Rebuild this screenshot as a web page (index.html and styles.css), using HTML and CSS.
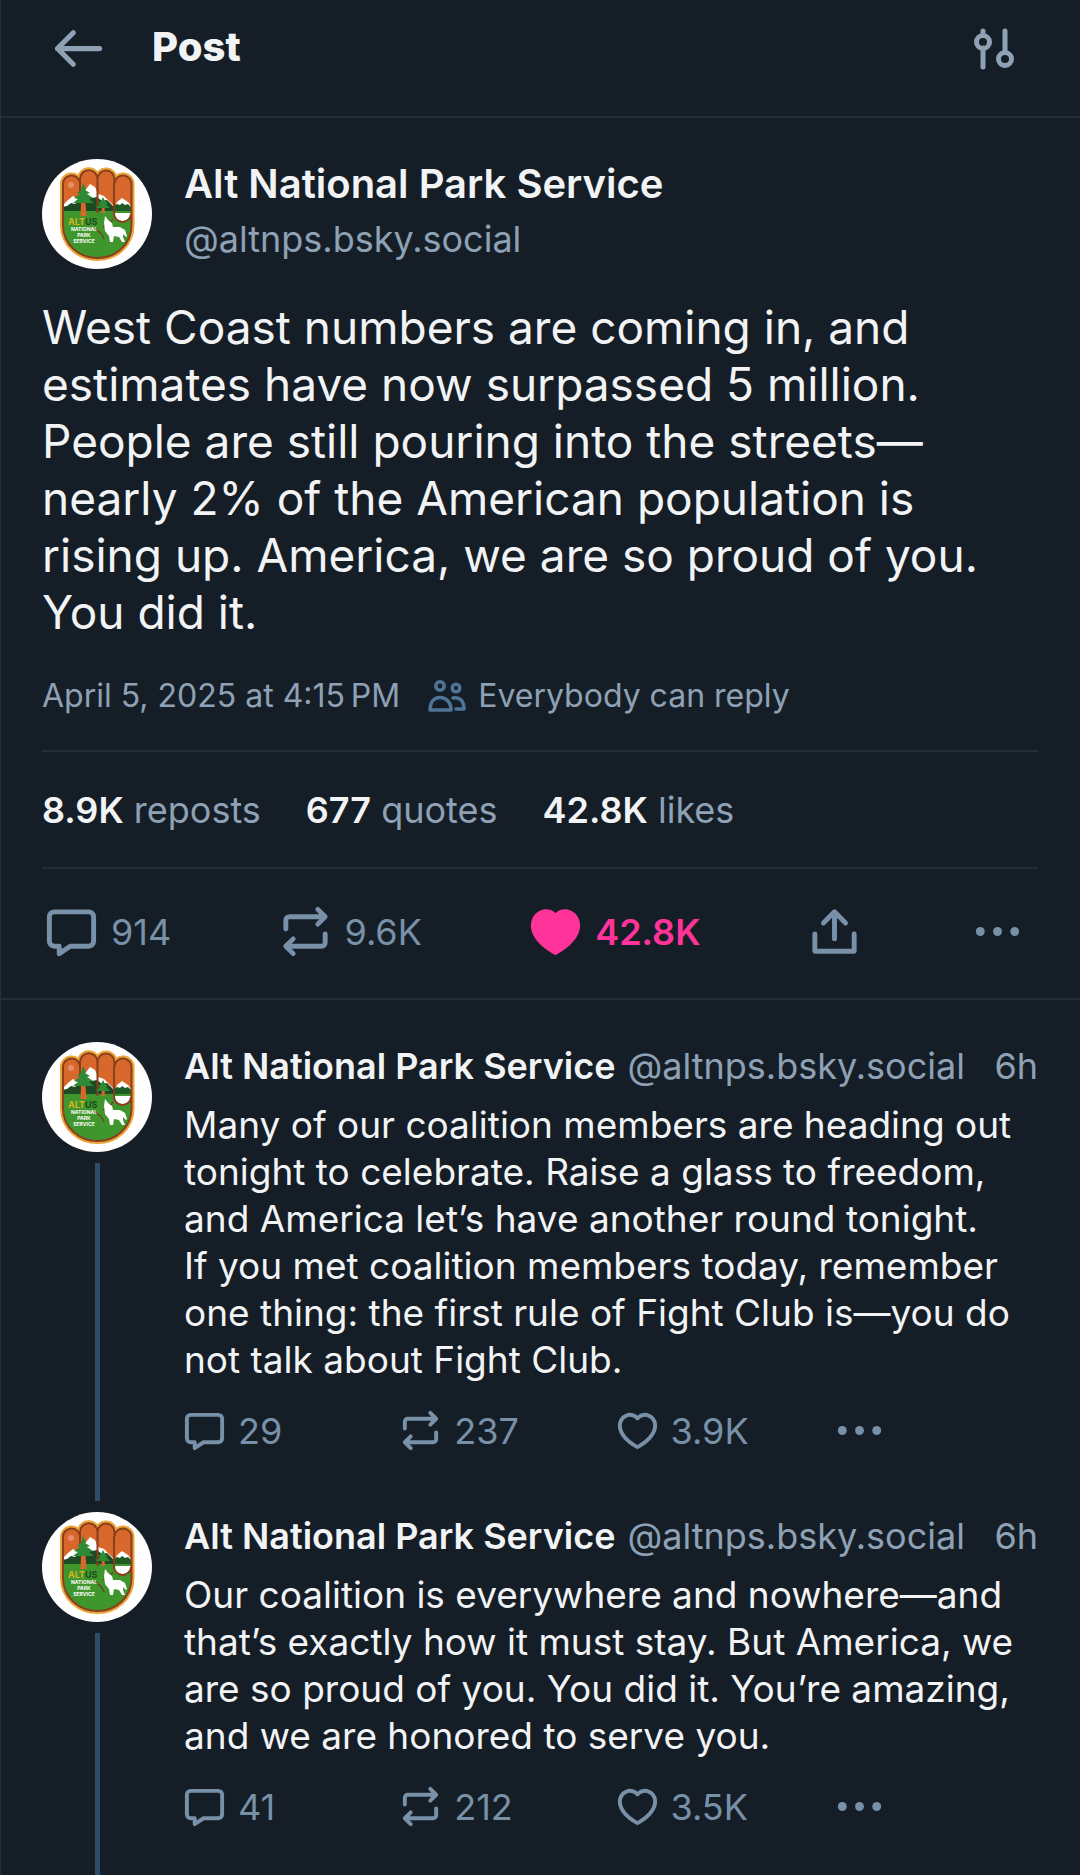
FILE: index.html
```html
<!DOCTYPE html>
<html lang="en">
<head>
<meta charset="utf-8">
<meta name="viewport" content="width=device-width, initial-scale=1">
<title>Post</title>
<link rel="stylesheet" href="styles.css">
</head>
<body>
<svg class="sprite" aria-hidden="true">
  <symbol id="emblem" viewBox="0 0 110 110">
    <clipPath id="hand">
      <path d="M21 26a8 8 0 0 1 17-2V20a8.500 8.500 0 0 1 17.500 0 8.500 8.500 0 0 1 17 0v4a8 8 0 0 1 17 2V66c0 20-16 33-34 33S21 86 21 66z"/>
    </clipPath>
    <circle cx="55" cy="55" r="55" fill="#fff"/>
    <path d="M21 26a8 8 0 0 1 17-2V20a8.500 8.500 0 0 1 17.500 0 8.500 8.500 0 0 1 17 0v4a8 8 0 0 1 17 2V66c0 20-16 33-34 33S21 86 21 66z" fill="none" stroke="#eba53a" stroke-width="6" stroke-linejoin="round"/>
    <g clip-path="url(#hand)">
      <rect x="18" y="8" width="75" height="48" fill="#d8672c"/>
      <path d="M20 53V47l6-6 5-4 5 3 6-7 6-8 5 3 3 7 6 2 6 6 4 4v7z" fill="#fff"/>
      <path d="M20 54v-6l5-1 4-3 4 1 5-5 3-3 5-1 4 3 5-1 5 4 5-1 4 4 3 3v6z" fill="#1d4a22"/>
      <path d="M72 52l3-9 5-4 6 4 4 5v5z" fill="#fff"/>
      <path d="M72 53v-6l3-2 3 1 2-2 3 2 3-1 4 4v5z" fill="#1d5a24"/>
      <rect x="18" y="52" width="75" height="50" fill="#3f962c"/>
      <path d="M72 54h17a8.500 8 0 0 1-17 0z" fill="#fff"/>
      <path d="M38 19v16M55.500 20v34M72 24v30a8.500 8.500 0 0 0 17 1" fill="none" stroke="#8a3f1c" stroke-width="2"/>
      <path d="M71 60q-3 5-10 8M52 70q8 3 10 10" fill="none" stroke="#6b4a20" stroke-width="1.500"/>
      <path d="M38.500 57l1-26h3l2 26zM59.500 54l1-12h1.500l1 12z" fill="#d8672c"/>
      <path d="M41 24l3 6-1 1 5 3-3 1 6 4-4 1 5 4H31l5-4-4-1 6-4-3-1 4-3z" fill="#2f8a35"/>
      <path d="M61 38l2 4 3 2-2 1 4 4H54l4-4-2-1 3-2z" fill="#2f8a35"/>
      <circle cx="29" cy="26" r="3" fill="#e88e68"/>
    </g>
    <path d="M21 26a8 8 0 0 1 17-2V20a8.500 8.500 0 0 1 17.500 0 8.500 8.500 0 0 1 17 0v4a8 8 0 0 1 17 2V66c0 20-16 33-34 33S21 86 21 66z" fill="none" stroke="#8a3f1c" stroke-width="2" stroke-linejoin="round"/>
    <path d="M63 57l3 4 4 3 1 4h7l5 3 2 6-1 1-3-3v3l2 5h-3l-3-5-5-1-1 6h-3l-1-6-4-5-1-8z" fill="#fff"/>
  </symbol>
  <symbol id="back" viewBox="0 0 24 24">
    <path d="M4 12h16M10 6l-6 6 6 6" class="line"/>
  </symbol>
  <symbol id="sliders" viewBox="0 0 42 42">
    <path d="M10 3v4M10 20v19M32 3v21" fill="none" stroke="currentColor" stroke-width="5" stroke-linecap="round"/>
    <circle cx="10" cy="14" r="6.500" fill="none" stroke="currentColor" stroke-width="5"/>
    <circle cx="32" cy="31" r="6.500" fill="none" stroke="currentColor" stroke-width="5"/>
  </symbol>
  <symbol id="people" viewBox="0 0 38 32">
    <g fill="none" stroke="currentColor" stroke-width="3.500" stroke-linejoin="round">
      <circle cx="12" cy="6" r="4.200"/>
      <circle cx="28" cy="8" r="3.800"/>
      <path d="M2 30c0-8 4-12.500 10-12.500S23 22 23 30z"/>
      <path d="M25 18c7-1.500 11 3 11 11h-8" stroke-linecap="round"/>
    </g>
  </symbol>
  <symbol id="comment" viewBox="0 0 24 24">
    <path d="M5 4h14a2 2 0 0 1 2 2v10a2 2 0 0 1-2 2h-7.500L7 21v-3H5a2 2 0 0 1-2-2V6a2 2 0 0 1 2-2z" class="line"/>
  </symbol>
  <symbol id="repost" viewBox="0 0 24 24">
    <path d="M17 3l3 3-3 3M20 6H5.500A1.500 1.500 0 0 0 4 7.500V11M7 15l-3 3 3 3M4 18h14.500a1.500 1.500 0 0 0 1.500-1.500V13" class="line"/>
  </symbol>
  <symbol id="heart" viewBox="0 0 24 24">
    <path fill="currentColor" d="M16.734 5.091c-1.238-.276-2.708.047-4.022 1.380a1 1 0 0 1-1.424 0C9.974 5.137 8.504 4.814 7.266 5.090c-1.263.282-2.379 1.206-2.920 2.556C3.330 10.180 4.252 14.840 12 19.348c7.747-4.508 8.670-9.168 7.654-11.700-.541-1.351-1.657-2.275-2.920-2.557Zm4.777 1.812c1.604 4-.494 9.690-9.022 14.470a1 1 0 0 1-.978 0C2.983 16.592.885 10.902 2.490 6.902c.779-1.942 2.414-3.334 4.342-3.764 1.697-.378 3.552.003 5.169 1.286 1.617-1.283 3.472-1.664 5.170-1.286 1.927.430 3.562 1.822 4.340 3.764Z"/>
  </symbol>
  <symbol id="heart-filled" viewBox="0 0 24 24">
    <path fill="currentColor" d="M12.489 21.372c8.528-4.780 10.626-10.470 9.022-14.470-.779-1.941-2.414-3.333-4.342-3.763-1.697-.378-3.552.003-5.169 1.287-1.617-1.284-3.472-1.665-5.170-1.287-1.927.430-3.562 1.822-4.340 3.764-1.605 4 .493 9.690 9.021 14.470a1 1 0 0 0 .978 0Z"/>
  </symbol>
  <symbol id="share" viewBox="0 0 24 24">
    <path d="M4 13v7h16v-7M12 4v11M7.500 8.500L12 4l4.500 4.500" class="line"/>
  </symbol>
  <symbol id="more" viewBox="0 0 24 24">
    <g fill="currentColor"><circle cx="5" cy="12" r="1.800"/><circle cx="12" cy="12" r="1.800"/><circle cx="19" cy="12" r="1.800"/></g>
  </symbol>
</svg>

<main class="page">
  <header class="topbar">
    <button class="icon-button" aria-label="Back"><svg class="icon-back"><use href="#back"/></svg></button>
    <h1 class="title">Post</h1>
    <button class="icon-button" aria-label="Thread options"><svg class="icon-sliders"><use href="#sliders"/></svg></button>
  </header>

  <article class="post">
    <div class="author">
      <svg class="avatar" viewBox="0 0 110 110">
        <use href="#emblem"/>
        <text x="26" y="66" class="emblem-alt">ALT<tspan class="emblem-us">US</tspan></text>
        <text x="42" y="72" class="emblem-small">NATIONAL</text>
        <text x="42" y="78" class="emblem-small">PARK</text>
        <text x="42" y="84" class="emblem-small">SERVICE</text>
      </svg>
      <div>
        <a class="author-name" href="#profile">Alt National Park Service</a>
        <a class="author-handle" href="#profile">@altnps.bsky.social</a>
      </div>
    </div>
    <p class="post-text">West Coast numbers are coming in, and estimates have now surpassed 5 million. People are still pouring into the streets—nearly 2% of the American population is rising up. America, we are so proud of you. You did it.</p>
    <div class="meta">
      <time datetime="2025-04-05T16:15">April 5, 2025 at 4:15&#x202F;PM</time>
      <button class="audience"><svg class="icon-people" aria-hidden="true"><use href="#people"/></svg>Everybody can reply</button>
    </div>
    <div class="stats">
      <a href="#reposts"><b>8.9K</b> reposts</a>
      <a href="#quotes"><b>677</b> quotes</a>
      <a href="#likes"><b>42.8K</b> likes</a>
    </div>
    <div class="actions">
      <button class="action" aria-label="Reply"><svg class="icon-large"><use href="#comment"/></svg>914</button>
      <button class="action" aria-label="Repost"><svg class="icon-large"><use href="#repost"/></svg>9.6K</button>
      <button class="action liked" aria-label="Unlike"><svg class="icon-large"><use href="#heart-filled"/></svg>42.8K</button>
      <button class="action" aria-label="Share"><svg class="icon-large"><use href="#share"/></svg></button>
      <button class="action" aria-label="More"><svg class="icon-large"><use href="#more"/></svg></button>
    </div>
  </article>

  <section class="thread">
    <article class="reply">
      <div class="rail">
        <svg class="avatar" viewBox="0 0 110 110">
          <use href="#emblem"/>
          <text x="26" y="66" class="emblem-alt">ALT<tspan class="emblem-us">US</tspan></text>
          <text x="42" y="72" class="emblem-small">NATIONAL</text>
          <text x="42" y="78" class="emblem-small">PARK</text>
          <text x="42" y="84" class="emblem-small">SERVICE</text>
        </svg>
        <div class="rail-line"></div>
      </div>
      <div class="reply-body">
        <div class="byline"><a class="byline-name" href="#profile">Alt National Park Service</a><a class="byline-handle" href="#profile">@altnps.bsky.social</a><time>6h</time></div>
        <p class="reply-text">Many of our coalition members are heading out tonight to celebrate. Raise a glass to freedom, and America let’s have another round tonight.<br>If you met coalition members today, remember one thing: the first rule of Fight Club is—you do not talk about Fight Club.</p>
        <div class="reply-actions">
          <button class="action" aria-label="Reply"><svg class="icon"><use href="#comment"/></svg>29</button>
          <button class="action" aria-label="Repost"><svg class="icon"><use href="#repost"/></svg>237</button>
          <button class="action" aria-label="Like"><svg class="icon"><use href="#heart"/></svg>3.9K</button>
          <button class="action" aria-label="More"><svg class="icon-more"><use href="#more"/></svg></button>
        </div>
      </div>
    </article>
    <article class="reply">
      <div class="rail">
        <svg class="avatar" viewBox="0 0 110 110">
          <use href="#emblem"/>
          <text x="26" y="66" class="emblem-alt">ALT<tspan class="emblem-us">US</tspan></text>
          <text x="42" y="72" class="emblem-small">NATIONAL</text>
          <text x="42" y="78" class="emblem-small">PARK</text>
          <text x="42" y="84" class="emblem-small">SERVICE</text>
        </svg>
        <div class="rail-line"></div>
      </div>
      <div class="reply-body">
        <div class="byline"><a class="byline-name" href="#profile">Alt National Park Service</a><a class="byline-handle" href="#profile">@altnps.bsky.social</a><time>6h</time></div>
        <p class="reply-text">Our coalition is everywhere and nowhere—and that’s exactly how it must stay. But America, we are so proud of you. You did it. You’re amazing, and we are honored to serve you.</p>
        <div class="reply-actions">
          <button class="action" aria-label="Reply"><svg class="icon"><use href="#comment"/></svg>41</button>
          <button class="action" aria-label="Repost"><svg class="icon"><use href="#repost"/></svg>212</button>
          <button class="action" aria-label="Like"><svg class="icon"><use href="#heart"/></svg>3.5K</button>
          <button class="action" aria-label="More"><svg class="icon-more"><use href="#more"/></svg></button>
        </div>
      </div>
    </article>
  </section>
</main>
</body>
</html>
```
FILE: styles.css
```css
:root {
  --bg: #151e27;
  --border: #222e3a;
  --text: #f1f3f5;
  --muted: #8ea1b5;
  --icon: #7890a8;
  --rail: #304d68;
  --audience: #4e7498;
  --like: #ff3399;
}

* {
  box-sizing: border-box;
}

body {
  margin: 0;
  background: var(--bg);
  color: var(--text);
  font-family: Inter, "Liberation Sans", sans-serif;
  font-optical-sizing: none;
}

h1,
p {
  margin: 0;
}

a {
  color: inherit;
  text-decoration: none;
}

button {
  padding: 0;
  border: 0;
  background: none;
  color: inherit;
  font: inherit;
  cursor: pointer;
}

svg {
  display: block;
  flex: none;
}

.sprite {
  position: absolute;
  width: 0;
  height: 0;
}

.line {
  fill: none;
  stroke: currentColor;
  stroke-width: 2;
  stroke-linecap: round;
  stroke-linejoin: round;
}

.page {
  display: flex;
  flex-direction: column;
  min-height: 100vh;
  border-left: 1px solid var(--border);
}

.topbar {
  display: flex;
  align-items: center;
  padding: 17px 65px 36px 46px;
  border-bottom: 2px solid var(--border);
}

.icon-button {
  color: var(--muted);
}

.icon-back {
  width: 63px;
  height: 63px;
}

.icon-sliders {
  width: 42px;
  height: 42px;
}

.title {
  flex: 1;
  margin-left: 42px;
  padding-bottom: 4px;
  font-size: 40px;
  line-height: 48px;
  font-weight: 800;
}

.post {
  padding: 41px 42px 37px 41px;
  border-bottom: 2px solid var(--border);
}

.author {
  display: flex;
  gap: 32px;
}

.author-name,
.author-handle {
  display: block;
}

.author-name {
  font-size: 40px;
  line-height: 50px;
  font-weight: 600;
}

.author-handle {
  color: var(--muted);
  font-size: 36px;
  line-height: 60px;
}

.avatar {
  width: 110px;
  height: 110px;
}

.emblem-alt,
.emblem-small {
  font-weight: 700;
}

.emblem-alt {
  fill: #d9b51e;
  font-size: 9px;
}

.emblem-us {
  fill: #1d4a22;
}

.emblem-small {
  fill: #fff;
  font-size: 5px;
  text-anchor: middle;
}

.post-text {
  margin-top: 30px;
  font-size: 46px;
  line-height: 57px;
}

.meta {
  display: flex;
  align-items: center;
  gap: 28px;
  padding: 35px 0 34px;
  border-bottom: 2px solid var(--border);
  color: var(--muted);
  font-size: 32px;
  line-height: 40px;
}

.audience {
  display: flex;
  align-items: center;
  gap: 12px;
}

.icon-people {
  width: 38px;
  height: 32px;
  color: var(--audience);
}

.stats {
  display: flex;
  gap: 45px;
  padding: 34px 0 33px;
  border-bottom: 2px solid var(--border);
  color: var(--muted);
  font-size: 36px;
  line-height: 48px;
}

.stats b {
  color: var(--text);
  font-weight: 600;
}

.actions {
  display: flex;
  justify-content: space-between;
  padding: 33px 11px 0 0;
}

.action {
  display: flex;
  align-items: center;
  gap: 10px;
  color: var(--icon);
  font-size: 36px;
}

.liked {
  color: var(--like);
  font-weight: 600;
}

.icon-large {
  width: 59px;
  height: 59px;
}

.thread {
  display: flex;
  flex: 1;
  flex-direction: column;
  padding: 42px 42px 0 41px;
}

.reply {
  display: flex;
  gap: 32px;
}

.reply:last-child {
  flex: 1;
}

.rail {
  display: flex;
  flex-direction: column;
  align-items: center;
  padding-bottom: 11px;
}

.rail-line {
  flex: 1;
  width: 5px;
  margin-top: 11px;
  background: var(--rail);
}

.reply-body {
  flex: 1;
  padding-bottom: 52px;
}

.reply:last-child .rail {
  padding-bottom: 0;
}

.reply:last-child .reply-body {
  padding-bottom: 34px;
}

.byline {
  display: flex;
  color: var(--muted);
  font-size: 36px;
  line-height: 48px;
  white-space: nowrap;
}

.byline-name {
  margin-right: 12px;
  color: var(--text);
  font-weight: 600;
}

.byline-handle {
  margin-right: auto;
}

.reply-text {
  margin-top: 11px;
  font-size: 37px;
  line-height: 47px;
}

.reply-actions {
  display: grid;
  grid-template-columns: repeat(4, 1fr);
  align-items: center;
  margin: 18px -8px 0 -3px;
}

.icon {
  width: 47px;
  height: 47px;
}

.icon-more {
  width: 59px;
  height: 59px;
}
```
